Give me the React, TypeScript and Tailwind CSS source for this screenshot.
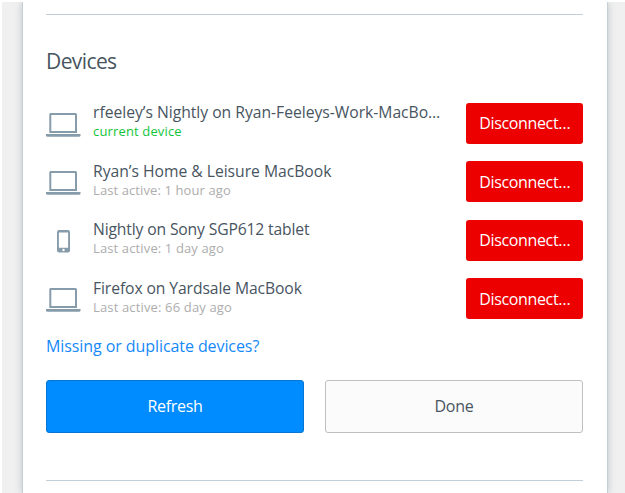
import React from "react";

type Device = {
  name: string;
  status: string;
  kind: "laptop" | "phone";
  current?: boolean;
  nameSpacing: string;
  statusSpacing: string;
};

const devices: Device[] = [
  { name: "rfeeley’s Nightly on Ryan-Feeleys-Work-MacBo…", status: "current device", kind: "laptop", current: true, nameSpacing: "tracking-[-0.02px]", statusSpacing: "tracking-[0.15px]" },
  { name: "Ryan’s Home & Leisure MacBook", status: "Last active: 1 hour ago", kind: "laptop", nameSpacing: "tracking-[-0.02px]", statusSpacing: "tracking-[0.1px]" },
  { name: "Nightly on Sony SGP612 tablet", status: "Last active: 1 day ago", kind: "phone", nameSpacing: "tracking-[-0.15px]", statusSpacing: "tracking-[0.13px]" },
  { name: "Firefox on Yardsale MacBook", status: "Last active: 66 day ago", kind: "laptop", nameSpacing: "tracking-[-0.1px]", statusSpacing: "tracking-[0.15px]" },
];

function LaptopIcon() {
  return (
    <svg width="35" height="24" viewBox="0 0 35 24" fill="#879cab" aria-hidden="true">
      <path fillRule="evenodd" d="M5 0h24.500a1.500 1.500 0 0 1 1.500 1.500V20H3.300V1.500A1.500 1.500 0 0 1 5 0ZM5.300 2v16h23.700V2Z" />
      <path d="M0 20.900h34.500v1.300a1.500 1.500 0 0 1-1.500 1.500H1.500A1.500 1.500 0 0 1 0 22.200Z" />
    </svg>
  );
}

function PhoneIcon() {
  return (
    <svg width="13" height="23" viewBox="0 0 13 23" fill="#879cab" aria-hidden="true">
      <path fillRule="evenodd" d="M2 0h9a2 2 0 0 1 2 2v18.500a2 2 0 0 1-2 2H2a2 2 0 0 1-2-2V2a2 2 0 0 1 2-2ZM1.900 2.500v15.200h9.200V2.500Z" />
      <circle cx="6.500" cy="20" r="1.200" fill="white" />
    </svg>
  );
}

function DeviceRow({ device }: { device: Device }) {
  return (
    <li className="flex h-[58.5px] items-start">
      <span className={`flex h-[34.5px] w-[35px] shrink-0 items-end justify-center ${device.kind === "phone" ? "pb-px" : ""}`}>
        {device.kind === "laptop" ? <LaptopIcon /> : <PhoneIcon />}
      </span>
      <div className="ml-3 w-[360px] whitespace-nowrap">
        <div className={`text-[15.7px] leading-[21px] text-[#48555f] ${device.nameSpacing}`}>{device.name}</div>
        <div className={`text-[13px] leading-[17px] ${device.current ? "text-[#12c63c]" : "text-[#adadad]"} ${device.statusSpacing}`}>{device.status}</div>
      </div>
      <button className="ml-auto mt-[0.3px] h-[41px] w-[117px] shrink-0 rounded-[3px] bg-[#ec0000] text-center text-[16px] tracking-[-0.35px] text-white">Disconnect…</button>
    </li>
  );
}

export default function App() {
  return (
    <div className="h-[493px] w-[625px] bg-white pl-[2px] pt-[2px] font-['Open_Sans','Noto_Sans',sans-serif]">
      <div className="flex h-[491px] overflow-hidden bg-[#f0f0f0] pl-[21px]">
        <main className="h-full w-[584px] bg-white pl-[23px] pr-[23.7px] shadow-[0_0_0_1px_#c3d0d8,0_0_8px_rgba(80,100,115,0.4)]">
          <hr className="mt-[12px] border-t border-[#c0cfda]" />
          <h1 className="mt-[31px] text-[21px] leading-[30px] tracking-[-0.6px] text-[#48555f]">Devices</h1>
          <ul className="mt-[26.4px]">
            {devices.map((d) => <DeviceRow key={d.name} device={d} />)}
          </ul>
          <a href="#" className="-mt-[2px] block h-[24px] text-[16px] leading-[24px] tracking-[-0.08px] text-[#1589f8]">Missing or duplicate devices?</a>
          <div className="mt-[21.6px] grid grid-cols-[258px_258px] gap-[21px] text-[16px]">
            <button className="h-[53px] rounded-[3px] border border-[#0675d3] bg-[#008cff] tracking-[-0.3px] text-white">Refresh</button>
            <button className="h-[53px] rounded-[3px] border border-[#bfbfbf] bg-[#fbfbfb] tracking-[-0.2px] text-[#48555f]">Done</button>
          </div>
          <hr className="mt-[47px] border-t border-[#c0cfda]" />
        </main>
      </div>
    </div>
  );
}
